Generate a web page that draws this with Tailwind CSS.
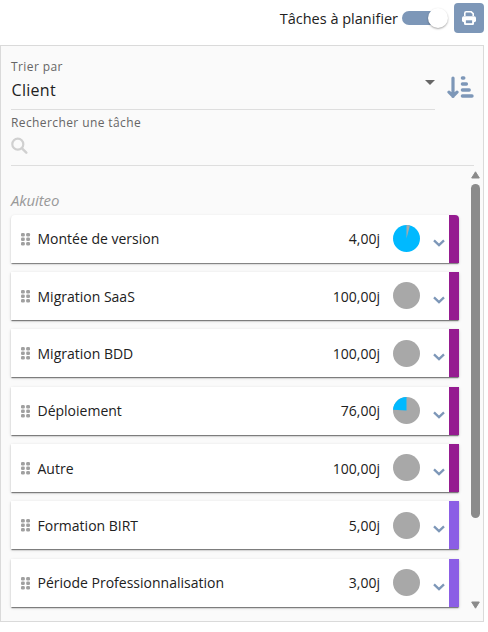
<!DOCTYPE html>
<html lang="fr">
<head>
    <meta charset="UTF-8">
    <meta name="viewport" content="width=device-width, initial-scale=1.0">
    <title>Tâches à planifier</title>
    <script src="https://cdn.jsdelivr.net/npm/@tailwindcss/browser@4"></script>
</head>
<body class="bg-white h-[632px] overflow-hidden font-['Open_Sans',sans-serif] text-[14px] text-[#212121]">

    <!-- Top bar -->
    <header class="w-[484px] h-[45px] pt-[3px] flex items-start justify-end">
        <span class="h-[30px] leading-[31px] mr-1 text-[14.500px]">Tâches à planifier</span>
        <button class="w-[46px] h-[30px] mr-[6px] flex items-center" aria-label="Tâches à planifier">
            <span class="w-[44px] h-[14px] rounded-full bg-[#7d97b8] flex items-center justify-end">
                <span class="w-5 h-5 shrink-0 rounded-full bg-white shadow-[0_1px_2px_rgba(0,0,0,0.35)] -mr-[2px]"></span>
            </span>
        </button>
        <button class="w-[30px] h-[30px] rounded-[4px] bg-[#7d97b8] flex items-center justify-center" aria-label="Imprimer">
            <svg class="w-[14px] h-[14px]" viewBox="0 0 14 14" fill="none">
                <path d="M2.800 5V2.200a1.400 1.400 0 0 1 1.400-1.400h5L11.200 2.600V5" stroke="#fff" stroke-width="1.600"/>
                <rect x="0" y="5.200" width="14" height="6" rx="1.800" fill="#fff"/>
                <rect x="2" y="8" width="10" height="6" rx="1.200" fill="#fff"/>
                <rect x="3.900" y="9.300" width="6.200" height="2.900" fill="#7d97b8"/>
            </svg>
        </button>
    </header>

    <!-- Panel -->
    <main class="w-[484px] h-[577px] bg-[#fafafa] border border-[#dadada] pl-[10px]">

        <!-- Sort -->
        <div class="flex h-[64px]">
            <div class="w-[424px] border-b border-[#dedede] pt-[13px] flex justify-between">
                <div>
                    <div class="text-[12px] leading-4 tracking-[0.4px] text-[#666]">Trier par</div>
                    <div class="text-[16px] leading-[30px] tracking-[0.3px] text-[#212121] pl-[0.500px]">Client</div>
                </div>
                <svg class="w-[10px] h-[5px] mt-[21px]" viewBox="0 0 10 5"><path d="M0 0h10L5 5z" fill="#666"/></svg>
            </div>
            <svg class="w-[28px] h-[24px] ml-[12px] mt-[29px]" viewBox="0 0 28 24" fill="none" stroke="#7d97b8" stroke-linecap="round" stroke-linejoin="round">
                <path d="M6 3v18.500M2 17.200L6 21.200l4-4" stroke-width="3.200"/>
                <path d="M15.400 3h1.400M15.400 9h4M15.400 15h6.800M15.400 21h9.600" stroke-width="3.400"/>
            </svg>
        </div>

        <!-- Search -->
        <div class="w-[463px] h-[56px] border-b border-[#dedede] pt-[5px]">
            <div class="text-[12px] leading-4 tracking-[0.4px] text-[#666]">Rechercher une tâche</div>
            <svg class="w-[17px] h-[17px] mt-[6px]" viewBox="0 0 17 17" fill="none" stroke="#d0d0d0" stroke-width="2.200" stroke-linecap="round">
                <circle cx="6.800" cy="7.200" r="5.500"/>
                <path d="M11 11.400l4.300 4.300" stroke-width="2.400"/>
            </svg>
        </div>

        <!-- Task list -->
        <div class="flex">
            <div class="w-[448px] pt-[25px]">
                <div class="h-[23.670px] leading-[19px] text-[15px] tracking-[-0.1px] italic text-[#999]">Akuiteo</div>
                <div id="tasks" class="flex flex-col gap-[9.330px]"></div>
            </div>
            <div class="ml-[10px] w-[13px] h-[448px] pt-[5px] pb-[5px] flex flex-col items-center">
                <svg class="w-[9px] h-[8px]" viewBox="0 0 9 8"><path d="M4.500 0.800L8.300 7H0.700z" fill="#8b8b8b" stroke="#8b8b8b" stroke-linejoin="round"/></svg>
                <div class="w-[9px] h-[334px] mt-[5px] rounded-full bg-[#8b8b8b]"></div>
                <svg class="w-[9px] h-[8px] mt-auto" viewBox="0 0 9 8"><path d="M4.500 7.200L8.300 1H0.700z" fill="#8b8b8b" stroke="#8b8b8b" stroke-linejoin="round"/></svg>
            </div>
        </div>
    </main>

    <script>
        // slice is the pie portion drawn over the base colour
        const tasks = [
            { name: 'Montée de version', days: '4,00j', color: '#951b90', base: '#00b9ff', slice: 'M13.500 13.500V0A13.500 13.500 0 0 1 16.900 0.430z', sliceColor: '#a8a8a8' },
            { name: 'Migration SaaS', days: '100,00j', color: '#951b90', base: '#a8a8a8' },
            { name: 'Migration BDD', days: '100,00j', color: '#951b90', base: '#a8a8a8' },
            { name: 'Déploiement', days: '76,00j', color: '#951b90', base: '#a8a8a8', slice: 'M13.500 13.500V0A13.500 13.500 0 0 0 0.030 12.700z', sliceColor: '#00b9ff' },
            { name: 'Autre', days: '100,00j', color: '#951b90', base: '#a8a8a8' },
            { name: 'Formation BIRT', days: '5,00j', color: '#8b5ee5', base: '#a8a8a8' },
            { name: 'Période Professionnalisation', days: '3,00j', color: '#8b5ee5', base: '#a8a8a8' }
        ];

        document.getElementById('tasks').innerHTML = tasks.map(task => `
            <div class="h-[48px] bg-white flex items-center overflow-hidden first:rounded-t-[4px] shadow-[0_2px_1px_-1px_rgba(0,0,0,0.3),0_1px_1px_rgba(0,0,0,0.2),0_1px_3px_rgba(0,0,0,0.16)]">
                <svg class="w-[10px] h-[13px] ml-[10px] mt-[1px]" viewBox="0 0 10 13" fill="#a0a0a0">
                    <rect x="0" y="0" width="3.800" height="3.600" rx="1.300"/><rect x="5.200" y="0" width="3.800" height="3.600" rx="1.300"/>
                    <rect x="0" y="4.500" width="3.800" height="3.600" rx="1.300"/><rect x="5.200" y="4.500" width="3.800" height="3.600" rx="1.300"/>
                    <rect x="0" y="9" width="3.800" height="3.600" rx="1.300"/><rect x="5.200" y="9" width="3.800" height="3.600" rx="1.300"/>
                </svg>
                <span class="ml-[6.500px] mt-[0.500px] flex-1 whitespace-nowrap">${task.name}</span>
                <span class="mt-[0.500px]">${task.days}</span>
                <svg class="w-[27px] h-[27px] ml-[13px]" viewBox="0 0 27 27">
                    <circle cx="13.500" cy="13.500" r="13.500" fill="${task.base}"/>
                    ${task.slice ? `<path d="${task.slice}" fill="${task.sliceColor}"/>` : ''}
                </svg>
                <svg class="w-[12px] h-[8px] ml-[13px] mt-[8px]" viewBox="0 0 12 8" fill="none" stroke="#7d97b8" stroke-width="2.300">
                    <path d="M1 1.400l5 4.800 5-4.800"/>
                </svg>
                <span class="w-[10px] h-full ml-[4px]" style="background:${task.color}"></span>
            </div>
        `).join('');
    </script>
</body>
</html>
